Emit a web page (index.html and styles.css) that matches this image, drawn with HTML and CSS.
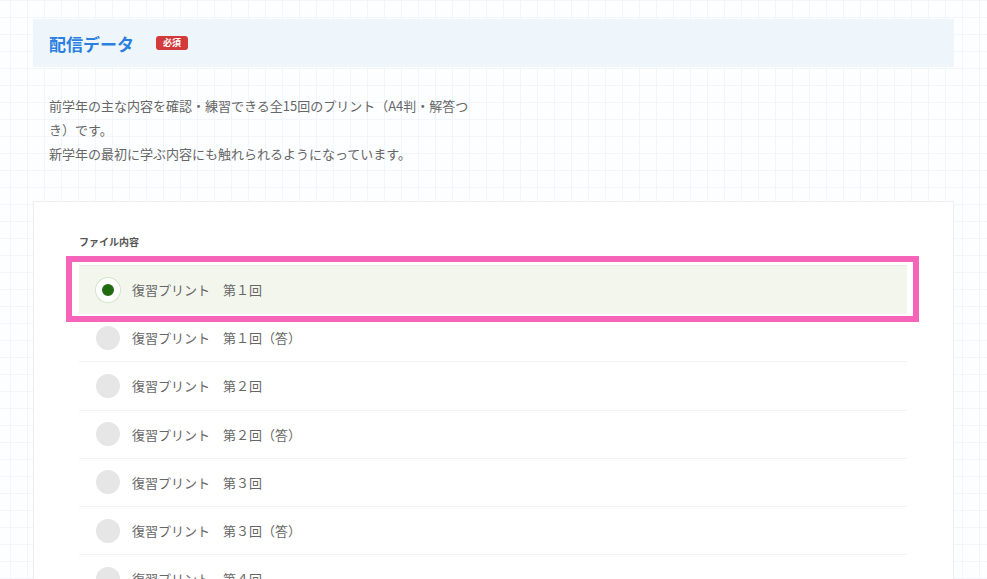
FILE: index.html
```html
<!DOCTYPE html>
<html lang="ja">
<head>
    <meta charset="UTF-8">
    <meta name="viewport" content="width=device-width, initial-scale=1.0">
    <title>配信データ</title>
    <link rel="stylesheet" href="styles.css">
</head>
<body>
    <div class="page">
        <div class="section-head">
            <h2 class="section-title">配信データ</h2>
            <span class="badge">必須</span>
        </div>
        <p class="desc">前学年の主な内容を確認・練習できる全15回のプリント（A4判・解答つき）です。<br>新学年の最初に学ぶ内容にも触れられるようになっています。</p>
        <div class="card">
            <div class="card-label">ファイル内容</div>
            <ul class="file-list">
                <li class="file-item selected"><span class="radio"></span>復習プリント　第１回</li>
                <li class="file-item"><span class="radio"></span>復習プリント　第１回（答）</li>
                <li class="file-item"><span class="radio"></span>復習プリント　第２回</li>
                <li class="file-item"><span class="radio"></span>復習プリント　第２回（答）</li>
                <li class="file-item"><span class="radio"></span>復習プリント　第３回</li>
                <li class="file-item"><span class="radio"></span>復習プリント　第３回（答）</li>
                <li class="file-item"><span class="radio"></span>復習プリント　第４回</li>
                <li class="file-item"><span class="radio"></span>復習プリント　第４回（答）</li>
            </ul>
        </div>
    </div>
</body>
</html>
```

FILE: styles.css
```css
/* Page and grid paper background */
body {
    margin: 0;
    font-family: "Noto Sans CJK JP", "Noto Sans", sans-serif;
    color: #666;
    background-color: #fdfeff;
    background-image:
        linear-gradient(#f1f6fa 1px, transparent 1px),
        linear-gradient(90deg, #f1f6fa 1px, transparent 1px);
    background-size: 17px 17px;
    background-position: 10px 0;
}
.page {
    padding: 19px 33px 0 33px;
}
/* Section heading */
.section-head {
    display: flex;
    align-items: center;
    height: 48px;
    padding-left: 16px;
    background: #eef6fb;
}
.section-title {
    margin: 0;
    font-size: 17px;
    font-weight: bold;
    color: #2b7fe0;
}
.badge {
    margin-left: 22px;
    padding: 0 7px;
    height: 14px;
    line-height: 14px;
    font-size: 9px;
    font-weight: bold;
    color: #fff;
    background: #d23a3c;
    border-radius: 3px;
}
/* Description */
.desc {
    margin: 27px 0 0 0;
    padding-left: 16px;
    max-width: 428px;
    font-size: 13px;
    line-height: 24px;
    color: #666;
}
/* File card */
.card {
    margin-top: 35px;
    padding: 33px 46px 0 45px;
    background: #fff;
    border: 1px solid #eeeeee;
    height: 400px;
}
.card-label {
    font-size: 10px;
    font-weight: bold;
    color: #555;
    line-height: 14px;
    margin-bottom: 16px;
}
.file-list {
    list-style: none;
    margin: 0;
    padding: 0;
}
.file-item {
    position: relative;
    display: flex;
    align-items: center;
    gap: 12px;
    height: 47.25px;
    padding-left: 17px;
    font-size: 13px;
    color: #666;
    border-bottom: 1px solid #f3f3f3;
}
.radio {
    width: 24px;
    height: 24px;
    border-radius: 50%;
    background: #e6e6e6;
    box-sizing: border-box;
}
.file-item.selected {
    background: #f3f6ed;
    border-top: 1px solid #e9ece6;
    box-sizing: border-box;
    height: 49px;
}
.file-item.selected .radio {
    background: #1f6c10;
    border: 6px solid #fff;
    box-shadow: 0 0 0 1px #d3e6c8;
}
/* Highlight annotation */
.file-item.selected::after {
    content: "";
    position: absolute;
    top: -10px;
    bottom: -9px;
    left: -13px;
    right: -12px;
    border: 6px solid #f564b8;
}
```
